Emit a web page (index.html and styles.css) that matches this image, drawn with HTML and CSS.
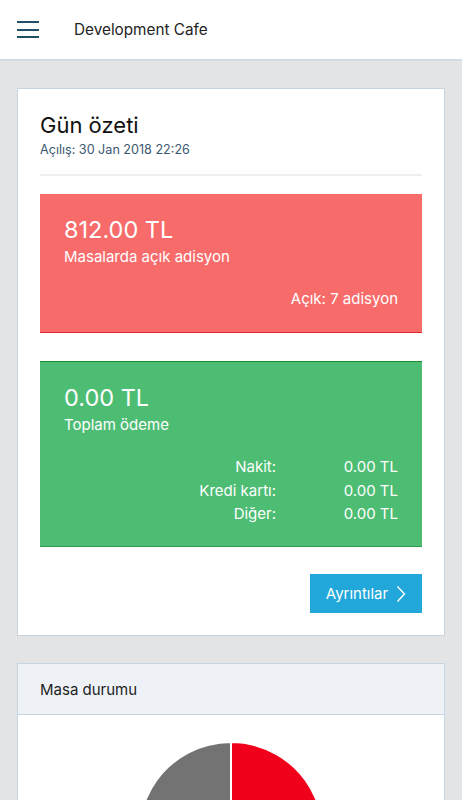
FILE: index.html
```html
<!DOCTYPE html>
<html lang="tr">
<head>
    <meta charset="UTF-8">
    <meta name="viewport" content="width=device-width, initial-scale=1.0">
    <title>Development Cafe</title>
    <link rel="stylesheet" href="styles.css">
</head>
<body>

    <header class="topbar">
        <button class="menu-btn" aria-label="Menü">
            <span></span><span></span><span></span>
        </button>
        <div class="topbar-title">Development Cafe</div>
    </header>

    <main class="content">

        <section class="card summary">
            <h1 class="summary-title">Gün özeti</h1>
            <div class="summary-sub">Açılış: 30 Jan 2018 22:26</div>
            <hr class="divider">

            <div class="tile tile-red">
                <div class="tile-amount">812.00 TL</div>
                <div class="tile-label">Masalarda açık adisyon</div>
                <div class="tile-note">Açık: 7 adisyon</div>
            </div>

            <div class="tile tile-green">
                <div class="tile-amount">0.00 TL</div>
                <div class="tile-label">Toplam ödeme</div>
                <div class="pay-list">
                    <span class="pay-name">Nakit:</span><span class="pay-value">0.00 TL</span>
                    <span class="pay-name">Kredi kartı:</span><span class="pay-value">0.00 TL</span>
                    <span class="pay-name">Diğer:</span><span class="pay-value">0.00 TL</span>
                </div>
            </div>

            <div class="actions">
                <button class="btn-details">
                    Ayrıntılar
                    <svg width="10" height="18" viewBox="0 0 10 18"><path d="M1.5 1.5 L8.5 9 L1.5 16.5" fill="none" stroke="#fff" stroke-width="1.4"/></svg>
                </button>
            </div>
        </section>

        <section class="card tables">
            <div class="card-head">Masa durumu</div>
            <div class="chart">
                <!-- masa durumu pastası -->
                <svg width="188" height="188" viewBox="-94 -94 188 188">
                    <path d="M0 0 L0 -92 A92 92 0 0 1 79.7 46 Z" fill="#f0001a" stroke="#fff" stroke-width="2"/>
                    <path d="M0 0 L79.7 46 A92 92 0 1 1 0 -92 Z" fill="#737373" stroke="#fff" stroke-width="2"/>
                </svg>
            </div>
        </section>

    </main>

</body>
</html>
```

FILE: styles.css
```css
body {
    margin: 0;
    font-family: 'Inter', 'Roboto', sans-serif;
    background-color: #e3e4e6;
    color: #222;
}

.topbar {
    height: 59px;
    background-color: #fff;
    border-bottom: 2px solid #d2dce3;
    display: flex;
    align-items: center;
}

.menu-btn {
    width: 22px;
    height: 17px;
    margin-left: 17px;
    padding: 0;
    border: none;
    background: none;
    display: flex;
    flex-direction: column;
    justify-content: space-between;
    cursor: pointer;
}

.menu-btn span {
    display: block;
    height: 2px;
    background-color: #1f4e68;
}

.topbar-title {
    margin-left: 35px;
    font-size: 15.3px;
    color: #222;
}

.content {
    padding: 27px 17px 40px;
}

.card {
    background-color: #fff;
    border: 1px solid #c6d5e0;
    margin-bottom: 27px;
}

.summary {
    padding: 22px 22px 22px;
}

.summary-title {
    margin: 0;
    font-size: 22px;
    font-weight: 400;
    line-height: 28px;
    color: #111;
}

.summary-sub {
    font-size: 12.6px;
    color: #3b5771;
    line-height: 17px;
    margin-top: 2px;
}

.divider {
    border: none;
    border-top: 2px solid #eeeeee;
    margin: 16px 0 18px;
}

.tile {
    color: #fff;
    padding: 22px 24px 0;
}

.tile-red {
    background-color: #f76b6b;
    border-bottom: 1px solid #e0262a;
    height: 116px;
}

.tile-green {
    background-color: #4dbd73;
    border-top: 1px solid #1e8a2e;
    border-bottom: 1px solid #2f9c48;
    margin-top: 28px;
    height: 162px;
}

.tile-amount {
    font-size: 23.5px;
    line-height: 28px;
}

.tile-label {
    font-size: 15px;
    line-height: 20px;
    margin-top: 3px;
}

.tile-note {
    font-size: 15px;
    text-align: right;
    margin-top: 22px;
}

.pay-list {
    display: grid;
    grid-template-columns: 1fr 122px;
    row-gap: 4px;
    margin-top: 22px;
    font-size: 15px;
    line-height: 19.5px;
    text-align: right;
}

.actions {
    display: flex;
    justify-content: flex-end;
    margin-top: 27px;
}

.btn-details {
    width: 112px;
    height: 39px;
    border: none;
    background-color: #21a7d9;
    color: #fff;
    font-family: inherit;
    font-size: 15px;
    display: flex;
    align-items: center;
    justify-content: center;
    gap: 8px;
    cursor: pointer;
}

.card-head {
    height: 50px;
    background-color: #eef2f6;
    border-bottom: 1px solid #c6d5e0;
    padding-left: 22px;
    display: flex;
    align-items: center;
    font-size: 15px;
    color: #222;
}

.chart {
    display: flex;
    justify-content: center;
    padding: 25px 0 24px;
}
```
